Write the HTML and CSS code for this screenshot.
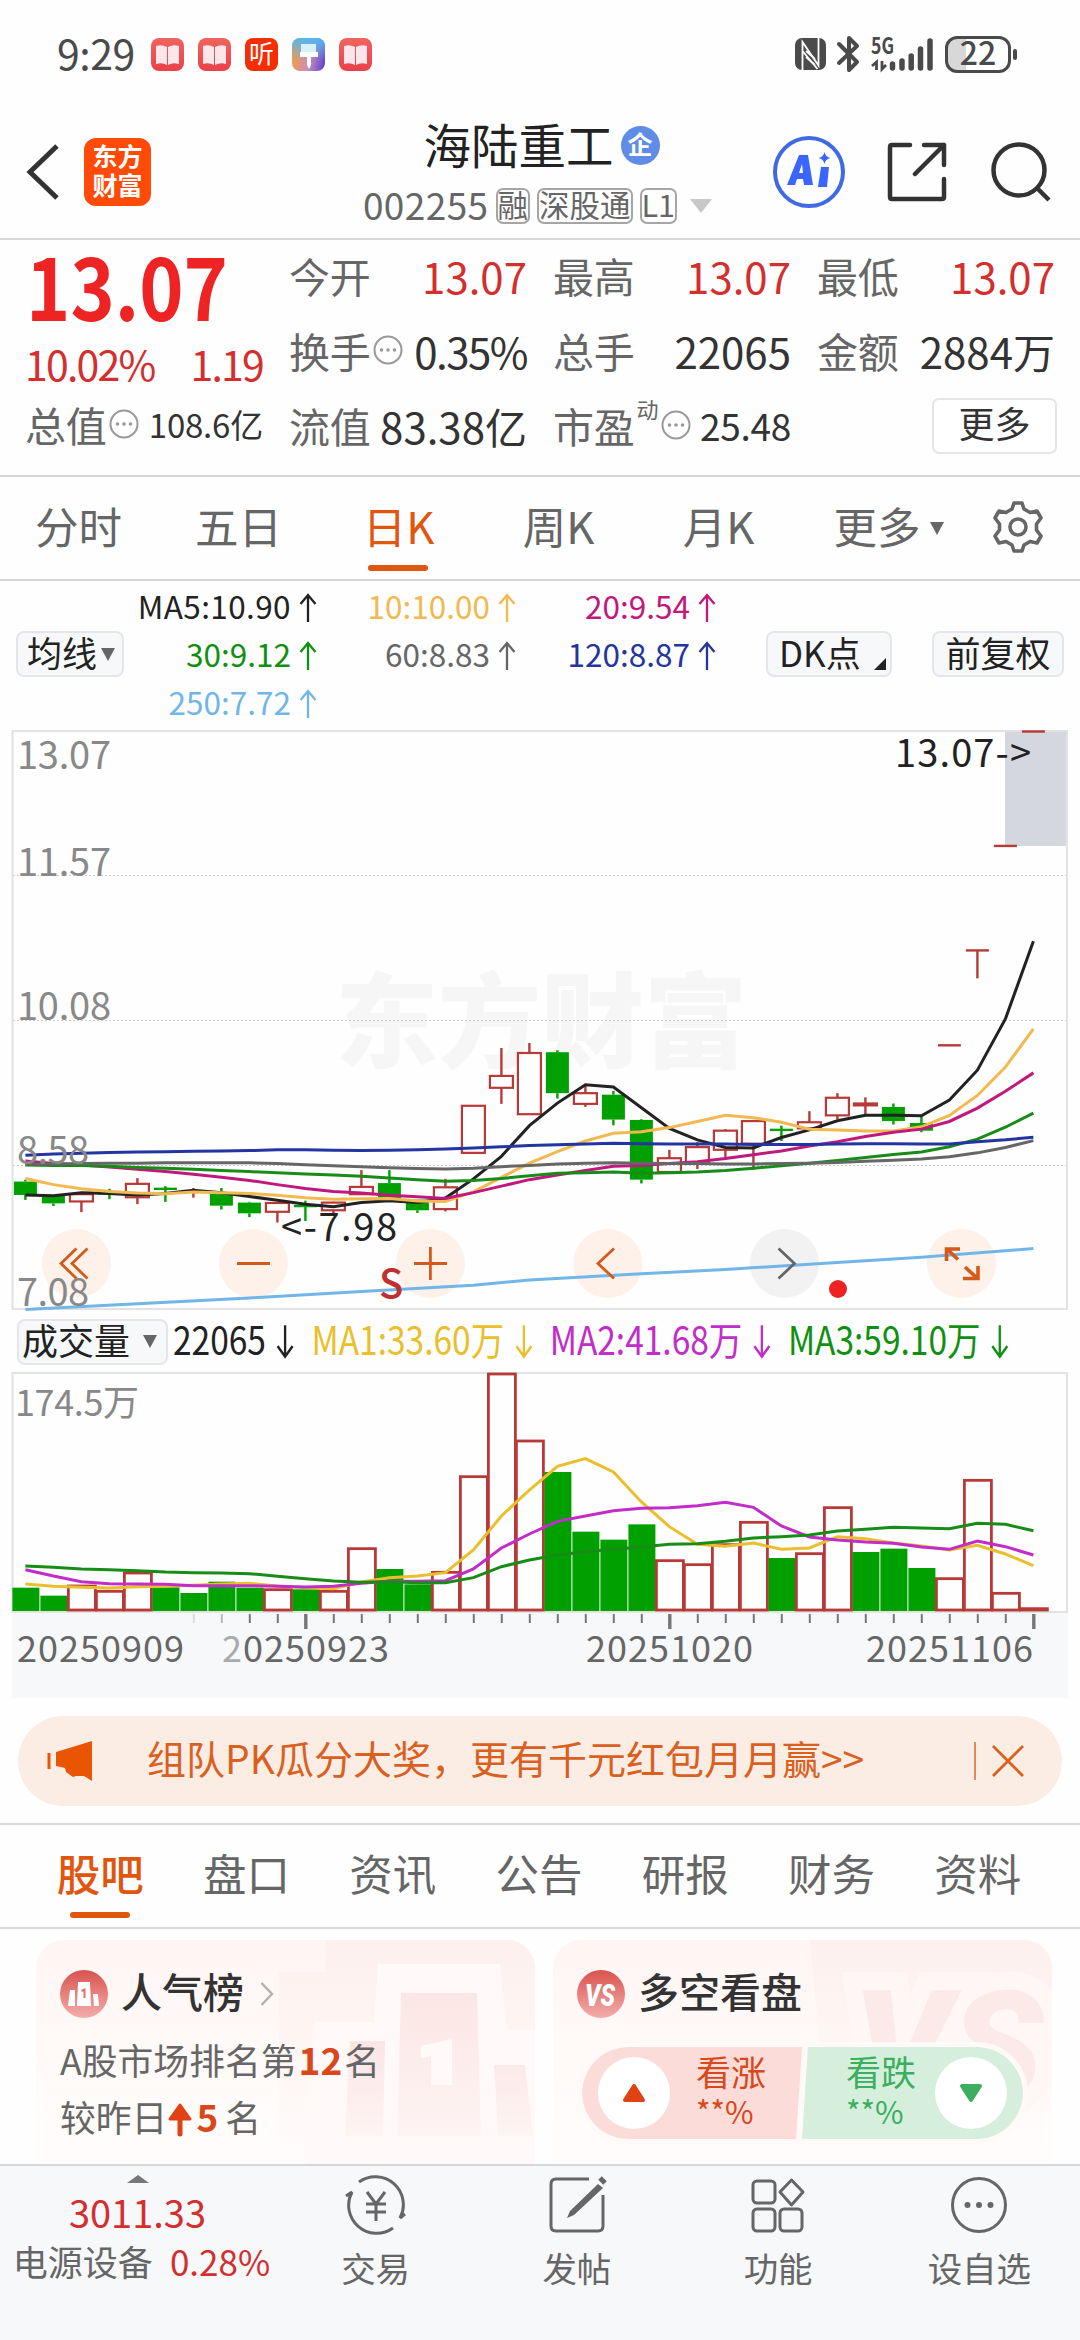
FILE: index.html
```html
<!DOCTYPE html>
<html lang="zh-CN">
<head>
  <meta charset="UTF-8" />
  <meta name="viewport" content="width=device-width, initial-scale=1.0" />
  <title>海陆重工 002255</title>
  <link rel="stylesheet" href="styles.css">
</head>
<body>
  <svg width="0" height="0" class="defs">
    <defs>
      <linearGradient id="book" x1="0" y1="0" x2="0" y2="1">
        <stop offset="0" stop-color="#f0645f" /><stop offset="1" stop-color="#e9414a" />
      </linearGradient>
      <linearGradient id="paint" x1="0" y1="0.7" x2="1" y2="0.9">
        <stop offset="0" stop-color="#f59a4c" /><stop offset="0.5" stop-color="#c98fb8" /><stop offset="1" stop-color="#5a3fd0" />
      </linearGradient>
      <linearGradient id="paintTop" x1="0" y1="0" x2="0" y2="1">
        <stop offset="0" stop-color="#4fb8f0" /><stop offset="0.7" stop-color="#4fb8f0" stop-opacity="0" />
      </linearGradient>
      <linearGradient id="coin" x1="0" y1="0" x2="0" y2="1">
        <stop offset="0" stop-color="#d9534f" /><stop offset="1" stop-color="#f3aeab" />
      </linearGradient>
      <linearGradient id="artOuter" x1="0" y1="0" x2="0" y2="1">
        <stop offset="0" stop-color="#fdf0ee" /><stop offset="1" stop-color="#fffcfb" />
      </linearGradient>
      <linearGradient id="artBar" x1="0" y1="0" x2="0" y2="1">
        <stop offset="0" stop-color="#fbe6e5" /><stop offset="1" stop-color="#fdf4f3" />
      </linearGradient>
      <symbol id="i-book" viewBox="0 0 33 33">
        <rect width="33" height="33" rx="8" fill="url(#book)" />
        <path d="M5 8q6-2 11 1v18q-5-3-11-1z" fill="#fde6ea" />
        <path d="M28 8q-6-2-11 1v18q5-3 11-1z" fill="#fde6ea" />
      </symbol>
      <symbol id="i-dots" viewBox="0 0 30 30">
        <circle cx="15" cy="15" r="13.5" fill="none" stroke="#999" stroke-width="2" />
        <g fill="#999"><circle cx="8.5" cy="15" r="1.8" /><circle cx="15" cy="15" r="1.8" /><circle cx="21.5" cy="15" r="1.8" /></g>
      </symbol>
      <symbol id="i-arrow" viewBox="0 0 18 30">
        <path d="M9 29V2M1.5 11L9 2l7.5 9" fill="none" stroke="currentColor" stroke-width="2.3" />
      </symbol>
    </defs>
  </svg>

  <div class="status-bar">
    <span class="clock">9:29</span>
    <div class="app-icons">
      <svg width="33" height="33"><use href="#i-book" /></svg>
      <svg width="33" height="33"><use href="#i-book" /></svg>
      <span class="listen">听</span>
      <svg width="33" height="33" viewBox="0 0 33 33">
        <rect width="33" height="33" rx="8" fill="url(#paint)" />
        <rect width="33" height="33" rx="8" fill="url(#paintTop)" />
        <path d="M9 6h15v8H9z" fill="#d5f1ff" />
        <path d="M8 14h18v5h-7v4h-4v-4H8z" fill="#fff" />
        <path d="M15 22h4v5l-2 4-2-4z" fill="#fff" />
      </svg>
      <svg width="33" height="33"><use href="#i-book" /></svg>
    </div>
    <div class="status-right">
      <svg width="31" height="32" viewBox="0 0 31 32">
        <rect width="31" height="32" rx="7" fill="#4a4a4a" />
        <path d="M7.500 32V4L23.500 27.500V0M7.500 13l15 18" fill="none" stroke="#fff" stroke-width="1.800" />
        <path d="M11 13l9 8M11 19l9 8" stroke="#fff" stroke-width="1.800" />
      </svg>
      <svg width="23" height="36" viewBox="0 0 23 36">
        <path d="M2 8l18 18-8 8V2l8 8L2 27" fill="none" stroke="#4a4a4a" stroke-width="4" stroke-linejoin="round" stroke-linecap="round" />
      </svg>
      <svg class="signal" width="63" height="36" viewBox="0 0 63 36">
        <text x="0" y="18" textLength="23" lengthAdjust="spacingAndGlyphs" class="net">5G</text>
        <path d="M5.500 34V26L1 30M11 25v8l4-4" fill="none" stroke="#4a4a4a" stroke-width="2.800" />
        <path d="M21.500 28v4M31 25v7M40.200 20v12M49.500 13v19M59 5v27" stroke="#4a4a4a" stroke-width="5.500" stroke-linecap="round" />
      </svg>
      <span class="battery"><i></i><b>22</b></span>
    </div>
  </div>

  <div class="header">
    <div class="header-left">
      <svg width="34" height="58" viewBox="0 0 34 58"><path d="M31 3L4 29l27 26" fill="none" stroke="#333" stroke-width="5" /></svg>
      <div class="logo">东方<br>财富</div>
    </div>
    <div class="header-title">
      <h1>海陆重工<span class="badge">企</span></h1>
      <p><span class="code">002255</span><span class="tag">融</span><span class="tag">深股通</span><span class="tag">L1</span><i class="tri"></i></p>
    </div>
    <div class="header-right">
      <svg width="72" height="72" viewBox="0 0 72 72">
        <circle cx="36" cy="36" r="34" fill="none" stroke="#4169e1" stroke-width="4" />
        <path d="M14 49l12-30h9l5 30h-9l-1-6h-6l-2 6zM26 37h4l-1-9z" fill="#3a66ff" fill-rule="evenodd" />
        <path d="M48 31h8l-2 20h-9z" fill="#3a66ff" />
        <path d="M51.500 16q1 5 6 6-5 1-6 6-1-5-6-6 5-1 6-6z" fill="#3a66ff" />
      </svg>
      <svg class="share" width="60" height="60" viewBox="0 0 60 60">
        <path d="M23 3H5q-2 0-2 2v50q0 2 2 2h50q2 0 2-2V37M37 3h20v20M57 3L28 32" fill="none" stroke="#333" stroke-width="4.500" stroke-linecap="round" stroke-linejoin="round" />
      </svg>
      <svg width="60" height="60" viewBox="0 0 60 60">
        <circle cx="28" cy="28" r="25.500" fill="none" stroke="#333" stroke-width="4.500" />
        <path d="M46 46l12 12" stroke="#333" stroke-width="4.500" />
      </svg>
    </div>
  </div>

  <div class="quote">
    <div class="quote-main">
      <div class="price"><span>13.07</span></div>
      <div class="change"><span>10.02%</span><span>1.19</span></div>
      <div class="cell small"><label>总值</label><svg width="30" height="30"><use href="#i-dots" /></svg><b>108.6亿</b></div>
    </div>
    <div class="quote-grid">
      <div class="cell up"><label>今开</label><b>13.07</b></div>
      <div class="cell up"><label>最高</label><b>13.07</b></div>
      <div class="cell up"><label>最低</label><b>13.07</b></div>
      <div class="cell"><label>换手</label><svg width="30" height="30"><use href="#i-dots" /></svg><b class="tight">0.35%</b></div>
      <div class="cell"><label>总手</label><b>22065</b></div>
      <div class="cell"><label>金额</label><b>2884万</b></div>
      <div class="cell"><label>流值</label><b>83.38亿</b></div>
      <div class="cell mid"><label>市盈</label><sup>动</sup><svg width="30" height="30"><use href="#i-dots" /></svg><b>25.48</b></div>
      <div class="cell"><button class="more">更多</button></div>
    </div>
  </div>

  <div class="periods">
    <span>分时</span>
    <span>五日</span>
    <span class="active">日K</span>
    <span>周K</span>
    <span>月K</span>
    <span class="period-more">更多<i class="tri"></i></span>
    <svg width="52" height="52" viewBox="0 0 52 52">
      <path d="M22 2h8l2 6 6 3.500 7-1.500 4 7-4.500 6v6l4.500 6-4 7-7-1.500-6 3.500-2 6h-8l-2-6-6-3.500-7 1.500-4-7 4.500-6v-6l-4.500-6 4-7 7 1.500 6-3.500z" fill="none" stroke="#666" stroke-width="3.600" stroke-linejoin="round" />
      <circle cx="26" cy="26" r="8" fill="none" stroke="#666" stroke-width="3.600" />
    </svg>
  </div>

  <div class="ma-bar">
    <span class="chip avg">均线<i class="tri"></i></span>
    <div class="ma-values">
      <span class="c-ma5 wide">MA5:10.90<svg width="18" height="30"><use href="#i-arrow" /></svg></span>
      <span class="c-ma10">10:10.00<svg width="18" height="30"><use href="#i-arrow" /></svg></span>
      <span class="c-ma20">20:9.54<svg width="18" height="30"><use href="#i-arrow" /></svg></span>
      <span class="c-ma30">30:9.12<svg width="18" height="30"><use href="#i-arrow" /></svg></span>
      <span class="c-ma60">60:8.83<svg width="18" height="30"><use href="#i-arrow" /></svg></span>
      <span class="c-ma120">120:8.87<svg width="18" height="30"><use href="#i-arrow" /></svg></span>
      <span class="c-ma250">250:7.72<svg width="18" height="30"><use href="#i-arrow" /></svg></span>
    </div>
    <span class="chip dk">DK点<i></i></span>
    <span class="chip adjust">前复权</span>
  </div>

  <svg id="price" class="chart" width="1080" height="587" viewBox="0 0 1080 587">
    <g id="price-back">
      <rect x="1005" y="6" width="62" height="115" fill="#d4d7dd" />
      <text x="335" y="335" class="watermark" textLength="412">东方财富</text>
      <path d="M13 150.500H1067M13 295.500H1067M13 440.500H1067" stroke="#ccc" stroke-dasharray="2 2" />
      <rect x="12.500" y="6" width="1054.500" height="578" fill="none" stroke="#e2e2e2" stroke-width="2" />
    </g>
    <g class="round-btns">
      <g fill="#fef1ea"><circle cx="76.400" cy="538.500" r="34.500" /><circle cx="253.400" cy="538.500" r="34.500" /><circle cx="430.400" cy="538.500" r="34.500" /><circle cx="607.800" cy="538.500" r="34.500" /><circle cx="961.500" cy="538.500" r="34.500" /></g>
      <circle cx="784.500" cy="538.500" r="34.500" fill="#f2f2f2" />
    </g>
    <g id="price-plot"></g>
    <g class="round-icons" fill="none" stroke="#d4591b" stroke-width="2.800">
      <path d="M76.500 523.500L61 538.500l15.500 15M87.500 523.500L72 538.500l15.500 15" />
      <path d="M237 538.500h33M414 538.500h33M430.400 522v33" />
      <path d="M614 523.500L598 538.500l16 15" />
      <path d="M778.500 523.500l16 15-16 15" stroke="#666" />
      <path d="M946.500 536V524H960M947 524l11 10.500M978 541v12.500H963M977 553l-12-11" stroke-width="3.600" />
    </g>
    <g class="axis">
      <text x="17" y="44" textLength="94">13.07</text>
      <text x="17" y="151" textLength="94">11.57</text>
      <text x="17" y="294.500" textLength="94">10.08</text>
      <text x="17" y="439" textLength="72">8.58</text>
      <text x="17" y="581" textLength="72">7.08</text>
    </g>
    <g class="marks">
      <text x="281" y="516" textLength="116">&lt;-7.98</text>
      <text x="895" y="42" textLength="136">13.07-&gt;</text>
      <text x="379" y="573" class="sell">S</text>
    </g>
    <circle cx="838" cy="564" r="9" fill="#e22" />
  </svg>

  <div class="vol-bar">
    <span class="chip">成交量<i class="tri"></i></span>
    <div class="vol-values">
      <span class="c-ma5">22065<svg width="21" height="35" viewBox="0 0 18 30"><use href="#i-arrow" class="flip" /></svg></span>
      <span class="c-v1">MA1:33.60万<svg width="21" height="35" viewBox="0 0 18 30"><use href="#i-arrow" class="flip" /></svg></span>
      <span class="c-v2">MA2:41.68万<svg width="21" height="35" viewBox="0 0 18 30"><use href="#i-arrow" class="flip" /></svg></span>
      <span class="c-ma30">MA3:59.10万<svg width="21" height="35" viewBox="0 0 18 30"><use href="#i-arrow" class="flip" /></svg></span>
    </div>
  </div>

  <svg id="volume" class="chart" width="1080" height="328" viewBox="0 0 1080 328">
    <rect x="12" y="242" width="1056" height="86" fill="#f7f8fa" />
    <rect x="12.500" y="3" width="1054.500" height="239" fill="none" stroke="#e2e2e2" stroke-width="2" />
    <text x="15" y="46" class="vol-max" textLength="124">174.5万</text>
    <g id="volume-plot"></g>
    <g class="dates">
      <text x="17" y="292" textLength="167">20250909</text>
      <text x="222" y="292" textLength="167"><tspan fill="#aaa">2</tspan>0250923</text>
      <text x="586" y="292" textLength="167">20251020</text>
      <text x="866" y="292" textLength="167">20251106</text>
    </g>
  </svg>

  <div class="banner">
    <svg width="46" height="40" viewBox="0 0 46 40">
      <path d="M45 0v40l-8-5-8 0-3 1-7-5-1-4-9-2V11z" fill="#ea5504" />
      <path d="M2 12v16" stroke="#ea5504" stroke-width="3" />
    </svg>
    <span class="banner-text">组队PK瓜分大奖，更有千元红包月月赢&gt;&gt;</span>
    <span class="banner-close">
      <svg width="32" height="32" viewBox="0 0 32 32"><path d="M1 1l30 30M31 1L1 31" stroke="#d9601f" stroke-width="2.800" /></svg>
    </span>
  </div>

  <div class="tabs">
    <span class="active">股吧</span>
    <span>盘口</span>
    <span>资讯</span>
    <span>公告</span>
    <span>研报</span>
    <span>财务</span>
    <span>资料</span>
  </div>

  <div class="cards">
    <div class="card">
      <svg class="art" width="499" height="224" viewBox="0 0 499 224">
        <path d="M290 0H499V224H243V32H289z" fill="url(#artOuter)" />
        <path d="M342 24H464L470 90H499V224H270L278 82H338z" fill="#fffaf9" />
        <path d="M365 53H441L445 196H361zM385 106L416 99V145H395V116L385 118z" fill="url(#artBar)" fill-rule="evenodd" />
        <path d="M314 101H349L347 196H309zM458 125H489L497 196H462z" fill="url(#artBar)" />
      </svg>
      <h2>
        <svg width="48" height="48" viewBox="0 0 48 48">
          <circle cx="24" cy="24" r="24" fill="url(#coin)" />
          <path d="M18 12h12l1 24H17zM10 20h5v16H8zM33 24h5l1 12h-5z" fill="#fff" />
          <path d="M21.500 21l3-1.500V28" fill="none" stroke="#e0706c" stroke-width="2" />
        </svg>
        <span>人气榜</span>
        <svg class="chev" width="14" height="24" viewBox="0 0 14 24"><path d="M1.500 1L12 12 1.500 23" fill="none" stroke="#b5b0af" stroke-width="2.400" /></svg>
      </h2>
      <p>A股市场排名第<b>12</b>名</p>
      <p>较昨日<svg width="24" height="34" viewBox="0 0 24 34"><path d="M12 12v19" stroke="#e04214" stroke-width="5" stroke-linecap="round" /><path d="M12 2l10 14H2z" fill="#e04214" stroke="#e04214" stroke-width="3" stroke-linejoin="round" /></svg><b class="rise">5</b>名</p>
    </div>
    <div class="card">
      <svg class="art" width="499" height="224" viewBox="0 0 499 224">
        <path d="M257 0H499V200H275z" fill="url(#artOuter)" />
        <text x="300" y="157" class="vs-art" textLength="190" lengthAdjust="spacingAndGlyphs">VS</text>
      </svg>
      <h2>
        <svg width="48" height="48" viewBox="0 0 48 48">
          <circle cx="24" cy="24" r="24" fill="url(#coin)" />
          <text x="8" y="36" class="vs" textLength="30" lengthAdjust="spacingAndGlyphs">VS</text>
        </svg>
        <span>多空看盘</span>
      </h2>
      <div class="vote">
        <div class="bull">
          <i><svg width="24" height="20" viewBox="0 0 24 20"><path d="M12 3l9 14H3z" fill="#e04214" stroke="#e04214" stroke-width="4" stroke-linejoin="round" /></svg></i>
          <span>看涨<br><small>**%</small></span>
        </div>
        <div class="bear">
          <span>看跌<br><small>**%</small></span>
          <i><svg width="24" height="20" viewBox="0 0 24 20"><path d="M12 17L3 3h18z" fill="#3cae5f" stroke="#3cae5f" stroke-width="4" stroke-linejoin="round" /></svg></i>
        </div>
      </div>
    </div>
  </div>

  <div class="bottom-nav">
    <div class="index">
      <i class="tri"></i>
      <b>3011.33</b>
      <p>电源设备<span>0.28%</span></p>
    </div>
    <div class="nav-item">
      <svg width="66" height="60" viewBox="0 0 66 60">
        <g fill="none" stroke="#666" stroke-width="3">
          <path d="M16 7A28 28 0 0 1 57 43l5-4" />
          <path d="M50 53A28 28 0 0 1 9 17l-6 4" />
          <path d="M24 17l9 12 9-12M33 29v17M23 29h20M23 37h20" />
        </g>
      </svg>
      交易
    </div>
    <div class="nav-item">
      <svg width="60" height="60" viewBox="0 0 60 60">
        <path d="M42 4H9Q4 4 4 9V51q0 5 5 5H51q5 0 5-5V20" fill="none" stroke="#666" stroke-width="3" />
        <path d="M51 9l5 4-29 27-7 3 3-7z" fill="#666" /><path d="M53 3l5 5" stroke="#666" stroke-width="5" />
      </svg>
      发帖
    </div>
    <div class="nav-item">
      <svg width="60" height="60" viewBox="0 0 60 60">
        <g fill="none" stroke="#666" stroke-width="3">
          <rect x="5" y="6" width="22" height="22" rx="4" /><rect x="5" y="34" width="22" height="22" rx="4" /><rect x="32" y="34" width="22" height="22" rx="4" />
          <path d="M43.500 5L55 17 43.500 30 32 17z" stroke-linejoin="round" />
        </g>
      </svg>
      功能
    </div>
    <div class="nav-item">
      <svg width="60" height="60" viewBox="0 0 60 60">
        <circle cx="30" cy="30" r="26.500" fill="none" stroke="#666" stroke-width="3" />
        <g fill="#666"><circle cx="18.500" cy="30" r="3" /><circle cx="30" cy="30" r="3" /><circle cx="41.500" cy="30" r="3" /></g>
      </svg>
      设自选
    </div>
  </div>

  <script src="chart.js"></script>
</body>
</html>
```

FILE: styles.css
```css
* {
  margin: 0;
  padding: 0;
  box-sizing: border-box;
}

body {
  width: 1080px;
  height: 2340px;
  overflow: hidden;
  background: #fefefe;
  color: #666;
  font-family: 'Noto Sans CJK SC', 'Noto Sans', sans-serif;
  line-height: 1;
}

svg { display: block; flex: none; }
.defs { position: absolute; }

b, i, h1, h2 { font-weight: normal; font-style: normal; }

.tri {
  display: inline-block;
  border: 7px solid transparent;
  border-top: 13px solid currentColor;
  border-bottom: 0;
}

/* status bar */
.status-bar {
  display: flex;
  align-items: center;
  height: 108px;
  padding: 0 69px 0 57px;
  color: #4a4a4a;
}

.clock { font-size: 41px; letter-spacing: -0.5px; width: 94px; margin-top: -4px; }
.app-icons { display: flex; gap: 14px; }

.listen {
  width: 33px;
  height: 33px;
  border-radius: 8px;
  background: #f52d05;
  color: #fff;
  font-size: 25px;
  line-height: 29px;
  text-align: center;
}

.status-right { display: flex; align-items: center; margin-left: auto; }
.status-right svg { margin-right: 11px; overflow: visible; }
.net { font-size: 23px; font-weight: 700; fill: #4a4a4a; }

.battery {
  position: relative;
  width: 66px;
  height: 37px;
  border: 3px solid #4a4a4a;
  border-radius: 12px;
  background: linear-gradient(90deg, #d8d8d8 18px, #fff 18px);
  text-align: center;
}

.battery b { font-size: 32px; font-weight: 500; line-height: 25px; display: block; }

.battery i {
  position: absolute;
  right: -9px;
  top: 10px;
  width: 4px;
  height: 11px;
  border-radius: 2px;
  background: #4a4a4a;
}

/* header */
.header {
  display: grid;
  grid-template-columns: 340px 1fr 340px;
  height: 132px;
  border-bottom: 2px solid #d8d8d8;
}

.header-left { display: flex; align-items: center; padding: 0 0 2px 26px; gap: 24px; }

.logo {
  width: 67px;
  height: 68px;
  border-radius: 12px;
  background: #ff4a08;
  color: #fff;
  font-size: 25px;
  font-weight: 700;
  line-height: 29px;
  padding-top: 3px;
  text-align: center;
}

.header-title { text-align: center; }

.header-title h1 {
  display: flex;
  justify-content: center;
  align-items: center;
  height: 72px;
  padding-left: 3px;
  font-size: 47.500px;
  color: #222;
}

.badge {
  width: 39px;
  height: 39px;
  margin: 3px 0 0 7px;
  border-radius: 50%;
  background: #5f8de6;
  color: #fff;
  font-size: 25px;
  font-weight: 700;
  line-height: 35px;
}

.header-title p { display: flex; align-items: center; justify-content: center; gap: 7px; height: 51px; padding-right: 5px; }
.code { font-size: 37px; letter-spacing: 0.4px; margin-top: -3px; }

.tag {
  height: 36px;
  border: 2px solid #a5a5a5;
  border-radius: 7px;
  font-size: 30.500px;
  line-height: 28px;
}

.header-title .tri { color: #c8c8c8; border-width: 14px 11px 0; margin-left: 6px; }
.header-right { display: flex; align-items: center; justify-content: flex-end; padding: 0 29px 2px 0; gap: 42px; }
.share { margin-right: 2px; }

/* quote */
.quote { display: flex; gap: 26px; height: 237px; padding: 0 25px; border-bottom: 2px solid #d8d8d8; }
.quote-main { width: 238px; color: #d32f2f; }
.price { height: 97px; padding: 2px 0 0 1px; font-size: 85px; font-weight: 700; line-height: 84px; color: #ee2424; }
.price span { display: inline-block; transform: scaleX(0.885); transform-origin: left; }
.change { display: flex; justify-content: space-between; align-items: center; height: 53px; font-size: 41px; letter-spacing: -1.800px; }
.quote-main .cell { height: 73px; }
.quote-grid { display: grid; grid-template-columns: repeat(3, 238px); grid-auto-rows: 75px; column-gap: 26px; }
.cell { position: relative; display: flex; align-items: center; color: #333; padding-bottom: 4px; }
.cell label { font-size: 41px; color: #666; letter-spacing: -0.300px; }
.cell svg { margin: 0 0 2px 3px; }
.cell b { margin-left: auto; font-size: 42px; white-space: nowrap; }
.cell.up b { color: #d32f2f; }
.cell.small b { font-size: 33px; letter-spacing: -0.200px; }
.cell.mid b { font-size: 37px; letter-spacing: -0.300px; }
.cell .tight { letter-spacing: -1.500px; }
.cell sup { font-size: 22px; margin: -36px 0 0 2px; color: #666; }
.cell.mid svg { margin-left: 3px; }

.more {
  width: 125px;
  height: 56px;
  margin: 0 -2px 0 auto;
  border: 2px solid #e6e6e6;
  border-radius: 7px;
  background: #fff;
  color: #333;
  font: 36px/1 'Noto Sans CJK SC', sans-serif;
  padding-bottom: 7px;
}

/* period tabs */
.periods {
  display: grid;
  grid-template-columns: repeat(6, 160px) 120px;
  justify-items: center;
  align-items: center;
  height: 104px;
  padding-bottom: 3px;
  border-bottom: 2px solid #d8d8d8;
  font-size: 43.500px;
}

.periods span { display: flex; align-items: center; position: relative; margin: -1px 3px 0 0; }
.periods .period-more { margin: -1px -17px 0 0; }
.periods .tri { margin: 4px 0 0 9px; }
.periods svg { margin: 1px 4px 0 0; }

.active { color: #e0560f; position: relative; }

.periods .active::after, .tabs .active::after {
  content: '';
  position: absolute;
  left: 50%;
  bottom: -23px;
  width: 60px;
  height: 6px;
  margin-left: -30px;
  border-radius: 3px;
  background: #e0560f;
}

/* moving averages */
.ma-bar { display: flex; align-items: center; height: 144px; padding: 2px 16px 0; }

.chip {
  display: flex;
  align-items: center;
  height: 46px;
  padding: 0 9px 5px;
  border: 2px solid #e4e6ec;
  border-radius: 8px;
  background: #f7f8fa;
  color: #222;
  font-size: 35px;
  white-space: nowrap;
}

.chip .tri { color: #666; margin: 5px 0 0 4px; }
.avg { width: 108px; }
.adjust { width: 132px; justify-content: center; }

.ma-values {
  display: grid;
  grid-template-columns: 193px 199px 200px;
  grid-auto-rows: 48px;
  font-size: 31.500px;
}

.ma-values span { display: flex; align-items: center; justify-content: flex-end; }
.ma-values .wide { letter-spacing: 0.400px; }
.ma-values svg { margin: 3px 0 0 8px; }
.chip.dk { position: relative; width: 126px; margin: 0 40px 0 50px; padding-left: 11px; }

.dk i {
  position: absolute;
  right: 4px;
  bottom: 5px;
  border-left: 12px solid transparent;
  border-bottom: 12px solid #222;
}

.c-ma5 { color: #222; }
.c-ma10 { color: #f2b950; }
.c-ma20 { color: #c0187c; }
.c-ma30 { color: #109010; }
.c-ma60 { color: #666; }
.c-ma120 { color: #2335a0; }
.c-ma250 { color: #70b6e8; }
.c-v1 { color: #e9bf2c; }
.c-v2 { color: #c22cc8; }

/* charts */
.chart text { font-size: 38px; }
.chart .watermark { font-size: 103px; font-weight: 900; fill: #f6f6f6; }
.axis text, .chart .vol-max { fill: #888; }
.chart .vol-max { font-size: 36px; }
.marks text { fill: #222; }
.marks .sell { font-size: 40px; font-weight: 500; fill: #c03030; }
.chart .dates text { font-size: 36px; fill: #666; }

.vol-bar { display: flex; align-items: center; height: 58px; padding: 1px 0 0 17px; }
.vol-bar .chip { width: 151px; padding-left: 3px; font-size: 36px; }
.vol-bar .chip .tri { margin-left: 13px; }

.vol-values {
  display: flex;
  gap: 20px;
  margin-left: 5px;
  font-size: 39px;
  white-space: nowrap;
  transform: scaleX(0.859);
  transform-origin: left;
}

.vol-values span { display: flex; align-items: center; margin-top: -6px; }
.vol-values svg { margin: 6px 0 0 12px; }
.flip { transform: rotate(180deg); transform-origin: 9px 15px; }

/* banner */
.banner {
  display: flex;
  align-items: center;
  height: 90px;
  margin: 18px 18px 17px;
  padding: 0 38px 0 29px;
  border-radius: 45px;
  background: #fcede4;
  color: #d9601f;
}

.banner-text { margin: -7px 0 0 54px; font-size: 39px; }
.banner-close { margin-left: auto; padding: 3px 0 3px 16px; border-left: 2px solid #e0895a; }

/* tabs */
.tabs {
  display: grid;
  grid-template-columns: repeat(7, 1fr);
  justify-items: center;
  align-items: center;
  height: 106px;
  padding: 0 29px 6px 27px;
  border-top: 2px solid #d8d8d8;
  border-bottom: 2px solid #d8d8d8;
  font-size: 43.500px;
}

.tabs .active { font-weight: 500; }

/* cards */
.cards { display: flex; gap: 18px; height: 235px; padding: 11px 28px 0 36px; overflow: hidden; }

.card {
  position: relative;
  width: 499px;
  height: 270px;
  padding: 30px 24px;
  border-radius: 28px;
  background: linear-gradient(#fff6f4, #fffdfc 224px);
  overflow: hidden;
}

.art { position: absolute; left: 0; top: 0; }
.card h2 { position: relative; display: flex; align-items: center; gap: 13px; height: 48px; color: #333; font-size: 41px; font-weight: 500; }
.card h2 span { margin-top: -7px; }
.card h2 .chev { margin-left: 3px; }
.card p { position: relative; display: flex; align-items: center; height: 57px; font-size: 35.800px; }
.card p:first-of-type { margin-top: 13px; }
.card p b { color: #d9481a; font-weight: 700; font-size: 37px; margin: 0 2px; }
.card p .rise { margin-right: 7px; }
.card p svg { margin: 6px 2px 0 1px; }
.vs-art { font: italic 900 150px 'Roboto', sans-serif; fill: #fceae9; stroke: #fff7f5; stroke-width: 36px; paint-order: stroke; }
.vs { font: italic 900 31px 'Roboto', sans-serif; fill: #fff; }

.vote {
  position: relative;
  display: flex;
  width: 451px;
  height: 102px;
  margin-top: 24px;
  border: 5px solid #fffaf8;
  border-radius: 51px;
  background: #fffaf8;
  overflow: hidden;
}

.vote div { display: flex; align-items: center; height: 92px; }
.vote span { font-size: 35px; line-height: 38px; margin-top: -6px; }
.vote small { display: inline-block; font-size: 31px; line-height: 34px; }
.vote i { display: flex; align-items: center; justify-content: center; width: 72px; height: 72px; border-radius: 50%; background: #fff; }
.bull { width: 220px; padding-left: 16px; gap: 26px; background: #fcdcd8; color: #d9481a; clip-path: polygon(0 0, 100% 0, 97.300% 100%, 0 100%); border-radius: 46px 0 0 46px; }
.bear { width: 221px; padding-left: 44px; gap: 19px; background: #d6eedc; color: #3cae5f; clip-path: polygon(2.700% 0, 100% 0, 100% 100%, 0 100%); border-radius: 0 46px 46px 0; }

/* bottom nav */
.bottom-nav {
  display: grid;
  grid-template-columns: 275px repeat(4, 1fr);
  height: 177px;
  border-top: 2px solid #d5d8db;
  background: #f7f8fa;
}

.index { text-align: center; color: #d32f2f; padding-top: 9px; }
.index .tri { display: block; width: 22px; margin: 0 auto; border: 11px solid transparent; border-top: 0; border-bottom: 8px solid #777; }
.index b { display: block; margin-top: 10px; font-size: 38px; }
.index p { display: flex; justify-content: center; align-items: center; gap: 17px; margin: 12px 0 0 8px; color: #666; font-size: 35px; white-space: nowrap; }
.index span { color: #d32f2f; }
.nav-item { display: flex; flex-direction: column; align-items: center; padding-top: 9px; gap: 15px; font-size: 34.500px; }
```

FILE: chart.js
```js
const NS = "http://www.w3.org/2000/svg";
const RED = "#b83a38";
const GREEN = "#00a000";
const STEP = 28;
const START = 25.4;

const cx = i => START + i * STEP;
const priceY = v => v * 0.3827;
const volY = v => v / 3 - 60;

function draw(parent, name, attrs) {
  const el = document.createElementNS(NS, name);
  for (const key in attrs) el.setAttribute(key, attrs[key]);
  parent.appendChild(el);
}

function line(parent, values, color, toY) {
  const points = values.map((v, i) => Array.isArray(v) ? cx(v[0]) + "," + toY(v[1]) : cx(i) + "," + toY(v));
  draw(parent, "polyline", { points: points.join(" "), fill: "none", stroke: color, "stroke-width": 3 });
}

// [colour, high, body top, body bottom, low]
const candles = [
  ["g", 1188, 1193, 1228, 1241], ["g", 1228, 1230, 1250, 1257], ["r", 1226, 1226, 1245, 1273],
  ["g", 1212, 1224, 1224, 1239], ["r", 1184, 1199, 1234, 1252], ["g", 1205, 1212, 1212, 1246],
  ["r", 1210, 1218, 1218, 1235], ["g", 1210, 1220, 1256, 1266], ["g", 1246, 1248, 1276, 1286],
  ["r", 1249, 1249, 1272, 1300], ["g", 1243, 1257, 1257, 1296], ["r", 1246, 1248, 1268, 1276],
  ["r", 1163, 1207, 1226, 1226], ["g", 1163, 1197, 1240, 1240], ["g", 1240, 1240, 1268, 1275],
  ["r", 1186, 1208, 1265, 1271], ["r", 995, 995, 1118, 1118], ["r", 844, 917, 948, 990],
  ["r", 831, 857, 1017, 1017], ["g", 850, 855, 962, 976], ["r", 940, 962, 990, 998],
  ["g", 956, 966, 1031, 1046], ["g", 1030, 1032, 1188, 1198], ["r", 1110, 1132, 1168, 1168],
  ["r", 1090, 1103, 1143, 1160], ["r", 1056, 1060, 1110, 1131], ["r", 1035, 1035, 1094, 1162],
  ["g", 1047, 1058, 1058, 1087], ["r", 1009, 1038, 1054, 1054], ["r", 962, 974, 1020, 1030],
  ["r", 973, 989, 994, 1017], ["g", 989, 998, 1035, 1044], ["g", 1020, 1040, 1060, 1064],
  ["r", 837, 837, 837, 837], ["r", 589, 589, 589, 662], ["r", 316, 316, 316, 316],
  ["r", 17, 17, 17, 17]
];

const averages = {
  "#222": [1228, 1230, 1222, 1224, 1228, 1224, 1216, 1222, 1232, 1242, 1252, 1259, 1248, 1243, 1248, 1236, 1186, 1127, 1047, 988, 940, 946, 1000, 1054, 1084, 1104, 1105, 1078, 1058, 1034, 1020, 1020, 1021, 980, 902, 768, 565],
  "#f2b950": [1185, 1201, 1212, 1219, 1223, 1225, 1220, 1222, 1224, 1229, 1235, 1239, 1238, 1237, 1244, 1245, 1220, 1182, 1145, 1115, 1087, 1067, 1063, 1052, 1036, 1020, 1026, 1038, 1056, 1058, 1061, 1061, 1050, 1020, 968, 894, 794],
  "#c0187c": [1139, 1146, 1150, 1155, 1161, 1167, 1174, 1182, 1190, 1201, 1211, 1219, 1223, 1229, 1233, 1237, 1222, 1205, 1188, 1176, 1164, 1153, 1151, 1146, 1141, 1133, 1123, 1113, 1100, 1089, 1075, 1064, 1056, 1036, 1001, 957, 909],
  "#178c17": [1150, 1151, 1151, 1153, 1156, 1158, 1161, 1164, 1167, 1170, 1173, 1176, 1179, 1184, 1188, 1192, 1190, 1185, 1178, 1171, 1170, 1168, 1171, 1170, 1168, 1164, 1158, 1152, 1145, 1138, 1130, 1122, 1116, 1102, 1082, 1051, 1014],
  "#666": [1148, 1147, 1146, 1145, 1145, 1144, 1144, 1144, 1144, 1146, 1149, 1152, 1154, 1157, 1159, 1160, 1158, 1154, 1151, 1147, 1145, 1144, 1145, 1146, 1146, 1147, 1147, 1146, 1145, 1143, 1140, 1137, 1134, 1128, 1118, 1104, 1086],
  "#2335a0": [1124, 1121, 1119, 1117, 1116, 1115, 1114, 1113, 1112, 1110, 1110, 1111, 1112, 1111, 1110, 1108, 1105, 1102, 1099, 1097, 1095, 1093, 1094, 1095, 1095, 1095, 1096, 1096, 1096, 1095, 1094, 1094, 1095, 1095, 1089, 1084, 1077],
  "#70b6e8": [[0, 1527], [4, 1512], [8, 1497], [12, 1480], [16, 1464], [18, 1450], [22, 1434], [25, 1423], [28, 1409], [32, 1391], [36, 1368]]
};

const plot = document.getElementById("price-plot");

candles.forEach(([type, high, top, bottom, low], i) => {
  const x = cx(i);
  const color = type === "g" ? GREEN : RED;
  const y1 = priceY(top);
  const y2 = priceY(bottom);
  if (high < top) draw(plot, "path", { d: `M${x} ${priceY(high)}V${y1}`, stroke: color, "stroke-width": 2.4 });
  if (low > bottom) draw(plot, "path", { d: `M${x} ${y2}V${priceY(low)}`, stroke: color, "stroke-width": 2.4 });
  if (top === bottom) {
    draw(plot, "path", { d: `M${x - 11.5} ${y1}h23`, stroke: color, "stroke-width": 2.4 });
  } else if (type === "g") {
    draw(plot, "rect", { x: x - 11.5, y: y1, width: 23, height: y2 - y1, fill: color });
  } else {
    draw(plot, "rect", { x: x - 11.5, y: y1, width: 23, height: y2 - y1, fill: "none", stroke: color, "stroke-width": 2.2 });
  }
});

for (const color in averages) line(plot, averages[color], color, priceY);

const volumes = [
  "g833", "g857", "r828", "r844", "r789", "g832", "g849", "g815", "g833", "r839", "g838", "r844", "r716",
  "g777", "g823", "r787", "r500", "r192", "r393", "g486", "g665", "g689", "g643", "r752", "r764", "r704",
  "r637", "g744", "r731", "r593", "g726", "g716", "g774", "r806", "r511", "r850", "r896"
];

const volumeLines = {
  "#e9bf2c": [822, 829, 832, 834, 830, 829, 826, 822, 820, 828, 833, 836, 816, 803, 798, 788, 720, 618, 540, 469, 446, 486, 576, 650, 703, 709, 699, 718, 714, 680, 686, 699, 708, 720, 706, 732, 767],
  "#c22cc8": [779, 798, 815, 821, 822, 823, 827, 827, 827, 829, 831, 829, 820, 814, 814, 812, 777, 714, 672, 634, 618, 602, 595, 593, 587, 577, 592, 648, 681, 690, 696, 700, 711, 718, 693, 710, 735],
  "#178c17": [768, 772, 777, 779, 782, 786, 788, 789, 791, 799, 806, 813, 817, 815, 818, 818, 803, 770, 750, 735, 725, 718, 711, 703, 701, 694, 684, 680, 675, 663, 658, 652, 654, 656, 640, 643, 662]
};

const volPlot = document.getElementById("volume-plot");
const base = 241;

volumes.forEach((item, i) => {
  const y = volY(+item.slice(1));
  const x = cx(i);
  if (item[0] === "g") {
    draw(volPlot, "rect", { x: x - 13, y: y, width: 27, height: base - y, fill: GREEN });
  } else {
    draw(volPlot, "rect", { x: x - 13, y: y, width: 27, height: base - 1 - y, fill: "#fefefe", stroke: RED, "stroke-width": 2.8 });
  }
});

for (const color in volumeLines) line(volPlot, volumeLines[color], color, volY);

// day ticks, longer where a date label stands
for (let i = 6; i < 37; i++) {
  const major = i === 10 || i === 23 || i === 36;
  draw(volPlot, "path", {
    d: `M${cx(i) + 0.4} 244v${major ? 15 : 9}`,
    stroke: i === 6 ? "#ddd" : i === 7 ? "#bbb" : "#777",
    "stroke-width": major ? 3.4 : 2
  });
}
```
